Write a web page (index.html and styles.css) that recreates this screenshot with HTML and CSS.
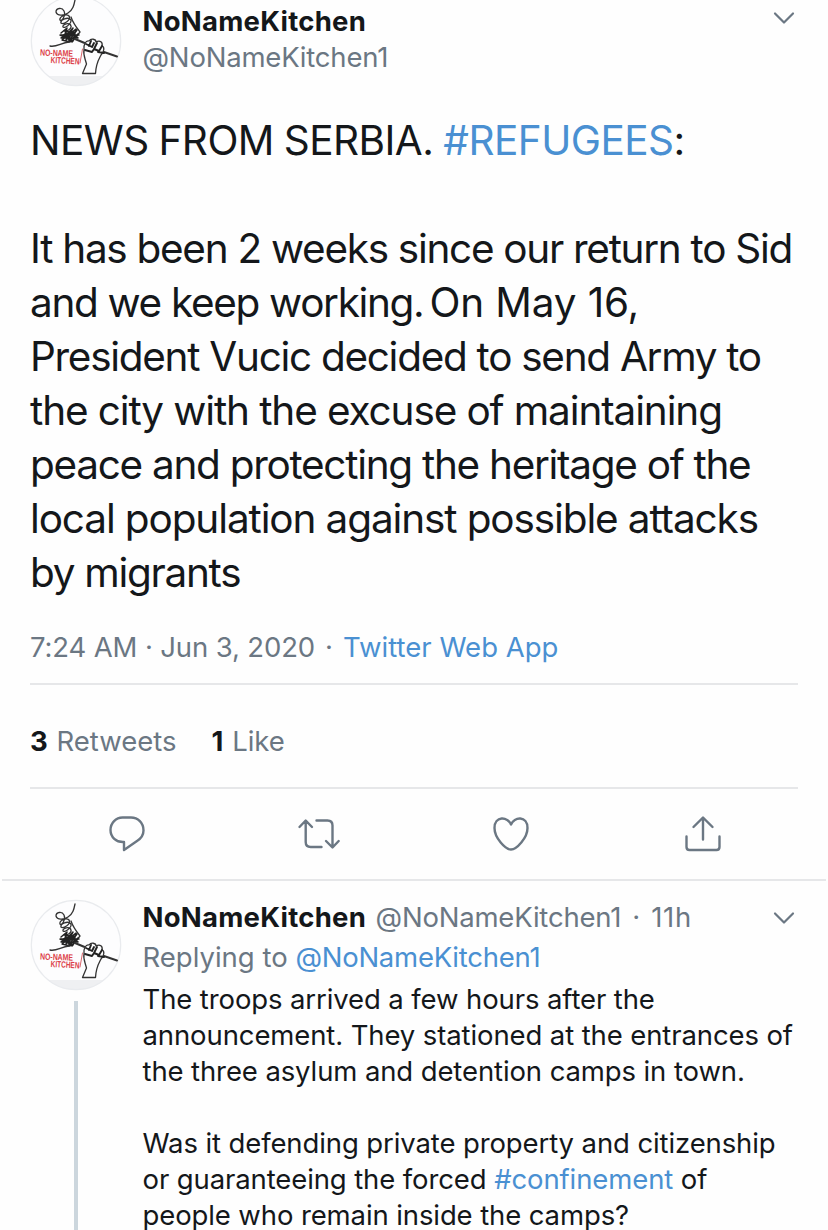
FILE: index.html
```html
<!DOCTYPE html>
<html lang="en">
<head>
<meta charset="utf-8">
<title>NoNameKitchen</title>
<link rel="stylesheet" href="styles.css">
</head>
<body>
<svg class="defs" width="0" height="0">
  <clipPath id="disc"><circle cx="46" cy="46" r="45"/></clipPath>
  <symbol id="logo" viewBox="0 0 92 92">
    <circle cx="46" cy="46" r="45" fill="#fdfdfe"/>
    <path d="M0 81H92V92H0Z" fill="#eff0f2" clip-path="url(#disc)"/>
    <circle cx="46" cy="46" r="44.7" fill="none" stroke="#e9ebee" stroke-width="1.2"/>
    <g fill="none" stroke="#333" stroke-width="1.300" stroke-linecap="round" stroke-linejoin="round">
      <path d="M45 5C44 10 43 15 38 18C34 21 27 21 26 17C26 13 32 12 34 16C36 20 32 27 30 25C29 22 36 18 39 21C42 25 33 30 31 28C30 25 38 21 41 25C42 29 34 34 33 32C32 29 40 27 41 31C42 34 36 37 34 36"/>
      <path d="M41 22C43 28 46 32 50 37L46 42"/>
      <path stroke="#222" stroke-width="1.500" d="M31 38L37 33L34 42L43 33L36 45L47 35L38 47L48 39L42 47L33 40L45 37L31 43L48 43L35 35L40 47L32 45L46 34L43 46L30 40L49 40"/>
      <path d="M20 51C26 52.500 31 48 39 47"/>
      <path stroke-width="2" d="M45 44L57 49M71 56L87 61.500"/>
      <path fill="#fdfdfe" d="M52.500 78.500L56.500 69C55 63 53 60 54 55C53 50 56 45 59 46C61 43 66 44 66 47C70 45 73 47 72 51C75 52 74 57 71 60C69 64 66 68 65.500 78.500Z"/>
      <path stroke="#222" stroke-width="1.900" d="M56 49L62 52L64 48M61 46L59 51M67 48L64 54L69 56L72 51M55 55L62 57L64 54M68 57L74 58"/>
      <path stroke="#d8656b" stroke-width="1" d="M52.500 54L50 68"/>
    </g>
    <g class="logo-text"><text x="10" y="60.500" textLength="33" lengthAdjust="spacingAndGlyphs" transform="rotate(2 10 60)">NO-NAME</text><text x="20.500" y="68" textLength="29" lengthAdjust="spacingAndGlyphs" transform="rotate(3 20 67)">KITCHEN</text></g>
  </symbol>
  <symbol id="chevron" viewBox="0 0 22 14"><path d="M2 2.500L11 11.500L20 2.500"/></symbol>
</svg>
<main class="page">
  <header class="author">
    <svg class="avatar"><use href="#logo"/></svg>
    <div class="who"><div class="name">NoNameKitchen</div><div class="muted handle">@NoNameKitchen1</div></div>
    <svg class="chev"><use href="#chevron"/></svg>
  </header>
  <div class="tweet">
    <p class="headline">NEWS FROM SERBIA. <a>#REFUGEES</a>:</p>
    <p>&nbsp;</p>
    <p class="tight">It has been 2 weeks since our return to Sid</p>
    <p><span class="tighter">and we keep working. </span><span class="wide">On May 16,</span></p>
    <p class="tight">President Vucic decided to send Army to</p>
    <p class="loose">the city with the excuse of maintaining</p>
    <p class="tight">peace and protecting the heritage of the</p>
    <p class="loose">local population against possible attacks</p>
    <p class="tight">by migrants</p>
  </div>
  <div class="meta muted"><span class="date">7:24 AM · Jun 3, 2020</span><span class="dot">·</span><a>Twitter Web App</a></div>
  <div class="stats muted"><span><b>3</b> <span>Retweets</span></span><span><b>1</b> <span>Like</span></span></div>
  <nav class="actions">
    <svg viewBox="0 0 46 40"><path d="M18.500 3.500H27C34 3.500 39.500 9 39.500 16.500C39.500 21 37 24.500 33 27L20 36V28C12 28.500 6.500 23 6.500 16C6.500 9 12 3.500 18.500 3.500Z"/></svg>
    <svg viewBox="0 0 46 40"><path d="M3.500 13L9.700 6.500L16 13M9.700 7V28Q9.700 33 14.700 33H25.500M20.500 6.500H31.500Q36.500 6.500 36.500 11.500V32.500M30 27L36.500 33.500L42.700 27"/></svg>
    <svg viewBox="0 0 46 40"><path d="M23 10.500C20 2.500 6.500 1.500 6.500 14C6.500 24 17.500 35.500 23 35.500C28.500 35.500 39.500 24 39.500 14C39.500 1.500 26 2.500 23 10.500Z"/></svg>
    <svg viewBox="0 0 46 40"><path d="M13.500 13L23 3.500L32.500 13M23 4V25.500M6.500 22.500V33Q6.500 36 9.500 36H36.500Q39.500 36 39.500 33V22.500"/></svg>
  </nav>
  <article class="reply">
    <div class="rail"><svg class="avatar"><use href="#logo"/></svg><div class="thread"></div></div>
    <div class="content">
      <div class="top"><span class="name">NoNameKitchen</span><span class="muted handle">@NoNameKitchen1</span><span class="muted dot">·</span><span class="muted age">11h</span><svg class="chev"><use href="#chevron"/></svg></div>
      <div class="muted to">Replying to <a>@NoNameKitchen1</a></div>
      <div class="body">
        <p>The troops arrived a few hours after the</p>
        <p>announcement. They stationed at the entrances of</p>
        <p>the three asylum and detention camps in town.</p>
        <p>&nbsp;</p>
        <p>Was it defending private property and citizenship</p>
        <p>or guaranteeing the forced <a>#confinement</a> of</p>
        <p>people who remain inside the camps?</p>
      </div>
    </div>
  </article>
</main>
</body>
</html>
```
FILE: styles.css
```css
* { box-sizing: border-box; }
body { margin: 0; background: #fefefe; color: #14171a; font: 27.500px/36px Inter, sans-serif; overflow: hidden; }
p { margin: 0; white-space: pre; }
a { color: #4a90d2; }
.defs { position: absolute; }
.page { width: 828px; height: 1230px; overflow: hidden; }
.muted { color: #6b7783; }
.name { font-weight: 700; color: #14171a; letter-spacing: 0.25px; }
.handle { letter-spacing: -0.200px; }
.avatar { width: 92px; height: 92px; flex: none; }
.chev { width: 22px; height: 14px; flex: none; margin-left: auto; fill: none; stroke: #6b7783; stroke-width: 2.200; stroke-linecap: round; stroke-linejoin: round; }
.logo-text { font: 700 9px "Liberation Sans", sans-serif; fill: #dc4048; }

.author { height: 113px; display: flex; padding: 3px 33px 0 30px; }
.author .avatar { margin-top: -8px; }
.author .who { margin-left: 20.500px; }
.author .chev { margin-top: 8px; }

.tweet { height: 486px; padding: 0.500px 0 0 30px; font-size: 40.500px; line-height: 54px; }
.headline { letter-spacing: -0.530px; word-spacing: -1px; }
.tighter { letter-spacing: -1.330px; }
.tight { letter-spacing: -1.290px; }
.loose { letter-spacing: -1.120px; }
.wide { margin-left: -4px; letter-spacing: -0.150px; word-spacing: 0; }

.meta { margin: 0 30px; height: 86px; padding-top: 30px; border-bottom: 2px solid #e6e7e9; display: flex; }
.date { letter-spacing: -0.130px; }
.meta .dot { margin: 0 10px; }
.stats { margin: 0 30px; height: 104px; padding-top: 38px; border-bottom: 2px solid #e6e7e9; display: flex; gap: 35px; }
.stats b { color: #14171a; }
.stats b + span { margin-left: 1px; }

.actions { height: 92px; margin: 0 2px; padding: 25px 0 0 102px; border-bottom: 2px solid #e6e7e9; display: flex; gap: 146px; }
.actions svg { flex: none; width: 46px; height: 40px; fill: none; stroke: #6b7783; stroke-width: 2.400; stroke-linecap: round; stroke-linejoin: round; }

.reply { display: flex; height: 349px; padding: 18px 33px 0 30px; }
.rail { width: 92px; flex: none; display: flex; flex-direction: column; align-items: center; gap: 10px; }
.thread { width: 4px; flex: 1; background: #ccd6dd; }
.content { margin-left: 20.500px; flex: 1; min-width: 0; }
.top { display: flex; height: 40px; }
.top .handle { margin-left: 9.500px; }
.top .dot { margin: 0 11px; }
.top .age { letter-spacing: 0.700px; }
.top .chev { margin-top: 12px; }
.to { height: 42px; }
.to a { letter-spacing: -0.250px; }
.body { letter-spacing: -0.110px; }
```
